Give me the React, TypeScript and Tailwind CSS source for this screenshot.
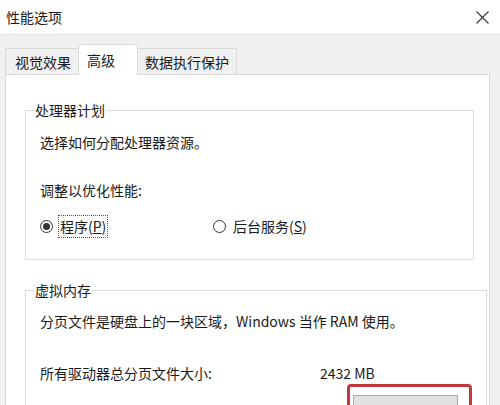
export default function App() {
  return (
    <div className="w-[500px] h-[405px] overflow-hidden flex flex-col bg-white text-[14px] leading-[20px] text-[#1a1a1a] font-['Noto_Sans_CJK_SC','Noto_Sans',sans-serif]">
      <div className="h-[34px] shrink-0 flex items-center justify-between pl-[6px] pr-[11px] bg-white">
        <span>性能选项</span>
        <svg width="13" height="13" viewBox="0 0 13 13" className="text-[#333]">
          <path d="M0.5 0.5 L12.5 12.5 M12.5 0.5 L0.5 12.5" stroke="currentColor" strokeWidth="1.1" fill="none" />
        </svg>
      </div>
      <div className="flex-1 flex flex-col bg-[#f0f0f0] border-t border-[#e6e6e6] pl-[5px] pr-[10px] pt-[9px]">
        <div className="h-[30px] shrink-0 flex items-end">
          <div className="w-[73px] h-[26px] flex items-center pl-[9px] border-l border-t border-[#d9d9d9] bg-[#f0f0f0]">
            视觉效果
          </div>
          <div className="relative z-10 w-[60px] h-[31px] -mb-px flex items-center pl-[8px] border-l border-t border-r border-[#d9d9d9] bg-white">
            高级
          </div>
          <div className="w-[99px] h-[26px] flex items-center justify-center border-t border-r border-[#d9d9d9] bg-[#f0f0f0]">
            数据执行保护
          </div>
        </div>
        <div className="flex-1 bg-white border border-[#d9d9d9] pl-[19px] pr-[15px] pt-[26px]">
          <fieldset className="border border-[#dcdcdc]">
            <legend className="ml-[8px] px-[1px] leading-[18px]">处理器计划</legend>
            <div className="px-[14px] pt-[13px] pb-[21px]">
              <div>选择如何分配处理器资源。</div>
              <div className="mt-[28px]">调整以优化性能:</div>
              <div className="mt-[14px] h-[24px] flex items-center">
                <div className="w-[173px] flex items-center">
                  <span className="w-[13px] h-[13px] rounded-full border border-[#333] flex items-center justify-center">
                    <span className="w-[7px] h-[7px] rounded-full bg-[#333]"></span>
                  </span>
                  <span className="ml-[5px] px-[1px] border border-dotted border-[#555] leading-[21px]">
                    程序(<span className="underline">P</span>)
                  </span>
                </div>
                <span className="w-[13px] h-[13px] rounded-full border border-[#333]"></span>
                <span className="ml-[5px] px-[1px] border border-transparent leading-[21px]">
                  后台服务(<span className="underline">S</span>)
                </span>
              </div>
            </div>
          </fieldset>
          <fieldset className="mt-[21px] border border-[#dcdcdc]">
            <legend className="ml-[8px] px-[1px] leading-[18px]">虚拟内存</legend>
            <div className="px-[14px] pt-[12px] pb-[20px]">
              <div>分页文件是硬盘上的一块区域，Windows 当作 RAM 使用。</div>
              <div className="mt-[32px] flex">
                <span className="w-[280px]">所有驱动器总分页文件大小:</span>
                <span>2432 MB</span>
              </div>
              <div className="mt-[1px] ml-[307px] w-[125px] h-[40px] border-[3px] border-[#c0393b] rounded-[4px] pl-[3px] pr-[11px] pt-[8px]">
                <div className="h-[30px] bg-[#e1e1e1] border border-[#adadad]"></div>
              </div>
            </div>
          </fieldset>
        </div>
      </div>
    </div>
  );
}
